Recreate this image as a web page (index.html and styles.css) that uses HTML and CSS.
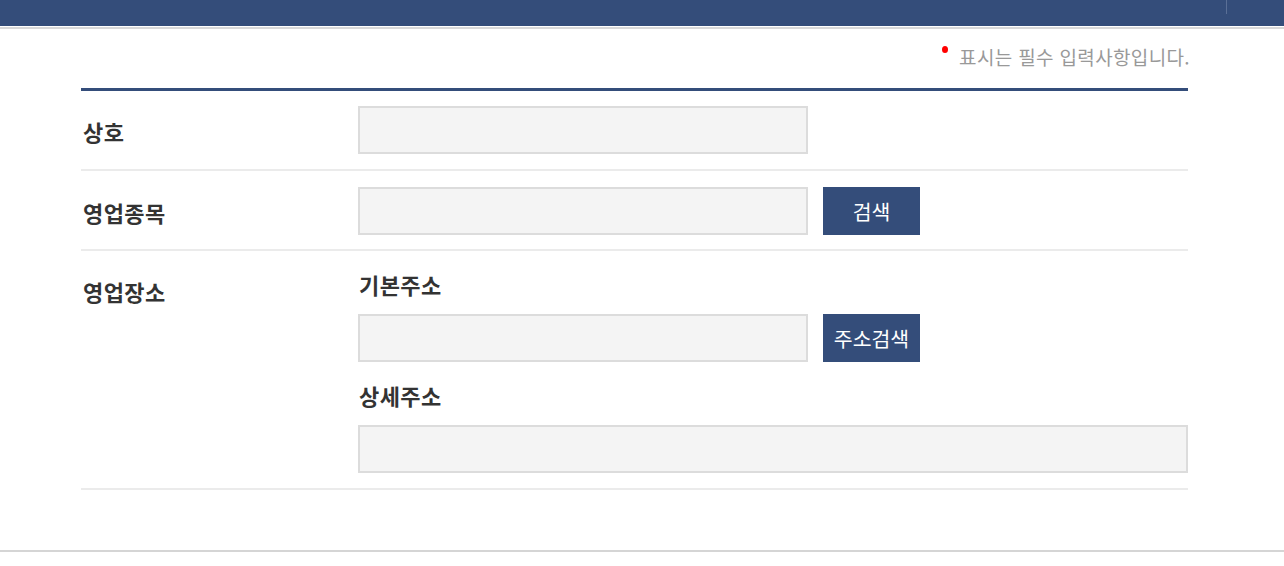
FILE: index.html
```html
<!DOCTYPE html>
<html lang="ko">
<head>
<meta charset="utf-8">
<link rel="stylesheet" href="styles.css">
</head>
<body>
<header class="topbar"><span class="topbar-divider"></span></header>
<div class="topline"></div>
<main class="form-wrap">
  <p class="notice"><span class="req-dot"></span>표시는 필수 입력사항입니다.</p>
  <div class="form-table">
    <div class="form-row">
      <div class="form-label">상호</div>
      <div class="form-field"><div class="field-line"><input class="text-input" type="text"></div></div>
    </div>
    <div class="form-row">
      <div class="form-label">영업종목</div>
      <div class="form-field"><div class="field-line"><input class="text-input" type="text"><button class="btn" type="button">검색</button></div></div>
    </div>
    <div class="form-row">
      <div class="form-label">영업장소</div>
      <div class="form-field">
        <div class="sub-label">기본주소</div>
        <div class="field-line"><input class="text-input" type="text"><button class="btn" type="button">주소검색</button></div>
        <div class="sub-label sub-label-next">상세주소</div>
        <div class="field-line"><input class="text-input text-input-wide" type="text"></div>
      </div>
    </div>
  </div>
</main>
<div class="bottom-line"></div>
</body>
</html>
```
FILE: styles.css
```css
* { box-sizing: border-box; }
html, body { margin: 0; padding: 0; background: #fff; }
body {
  font-family: "Noto Sans CJK KR", "Noto Sans", sans-serif;
  color: #333;
  width: 1284px;
}
.topbar {
  height: 26px;
  background: #344d7a;
  display: flex;
  justify-content: flex-end;
  align-items: flex-start;
  padding-right: 57px;
}
.topbar-divider {
  width: 1px;
  height: 14px;
  background: #5a6f96;
}
.topline {
  height: 2px;
  margin-top: 1px;
  background: #d9d9d9;
}
.form-wrap {
  margin: 0 96px 0 81px;
  padding-bottom: 60px;
}
.notice {
  margin: 16px -2px 19px 0;
  text-align: right;
  font-size: 19px;
  line-height: 24px;
  color: #999;
  letter-spacing: 0.35px;
}
.req-dot {
  display: inline-block;
  width: 6px;
  height: 7px;
  border-radius: 50%;
  background: #f00;
  vertical-align: 12px;
  margin-right: 11px;
}
.form-table {
  border-top: 3px solid #344d7a;
}
.form-row {
  display: grid;
  grid-template-columns: 277px 1fr;
  align-items: start;
  padding: 15px 0;
  border-bottom: 2px solid #ebebeb;
}
.form-row:nth-child(2) { padding-top: 16px; padding-bottom: 14px; }
.form-label {
  height: 48px;
  font-size: 22px;
  font-weight: 700;
  line-height: 48px;
  letter-spacing: 0.4px;
  padding-top: 1px;
  padding-left: 2px;
  color: #333;
}
.field-line {
  display: flex;
  gap: 15px;
}
.text-input {
  width: 450px;
  height: 48px;
  border: 2px solid #dcdcdc;
  background: #f4f4f4;
  margin: 0;
  padding: 0 10px;
  font: inherit;
  outline: none;
}
.text-input-wide { width: 830px; }
.btn {
  width: 97px;
  height: 48px;
  border: 0;
  margin: 0;
  padding: 0;
  background: #344d7a;
  color: #fff;
  font-family: inherit;
  font-size: 20.5px;
  line-height: 48px;
}
.sub-label {
  font-size: 22px;
  font-weight: 700;
  line-height: 40px;
  letter-spacing: 0.4px;
  margin: -2px 0 10px;
  padding-left: 1px;
}
.sub-label-next { margin-top: 13px; }
.bottom-line {
  height: 2px;
  background: #d5d5d5;
}
```
